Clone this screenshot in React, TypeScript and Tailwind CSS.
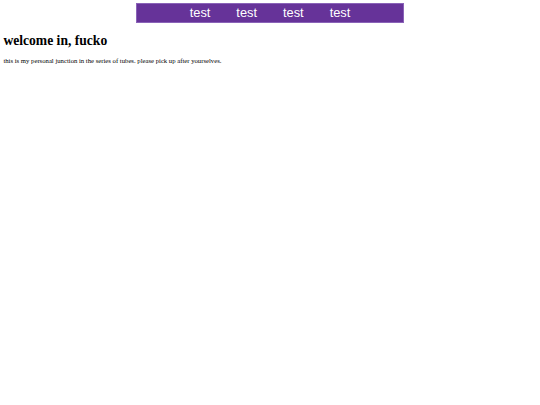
import React from "react";

const links = ["test", "test", "test", "test"];

const App = () => {
  return (
    <div className="min-h-[405px] bg-white p-[3.4px] text-black" style={{ fontFamily: '"Liberation Serif", serif' }}>
      <nav className="mx-auto flex h-[20px] w-[268px] items-center justify-center border border-[#8a63b8] bg-[#663399]">
        {links.map((label, i) => (
          <a
            key={i}
            href="#"
            className="px-[13px] text-[12.8px] leading-none text-white"
            style={{ fontFamily: '"Liberation Sans", Arial, sans-serif' }}
          >
            {label}
          </a>
        ))}
      </nav>
      <h1 className="mt-[10px] mb-[8px] text-[13.6px] font-bold leading-[1.15]">welcome in, fucko</h1>
      <p className="my-[6.8px] text-[6.7px] leading-[1.15]">
        this is my personal junction in the series of tubes. please pick up after yourselves.
      </p>
    </div>
  );
};

export default App;
